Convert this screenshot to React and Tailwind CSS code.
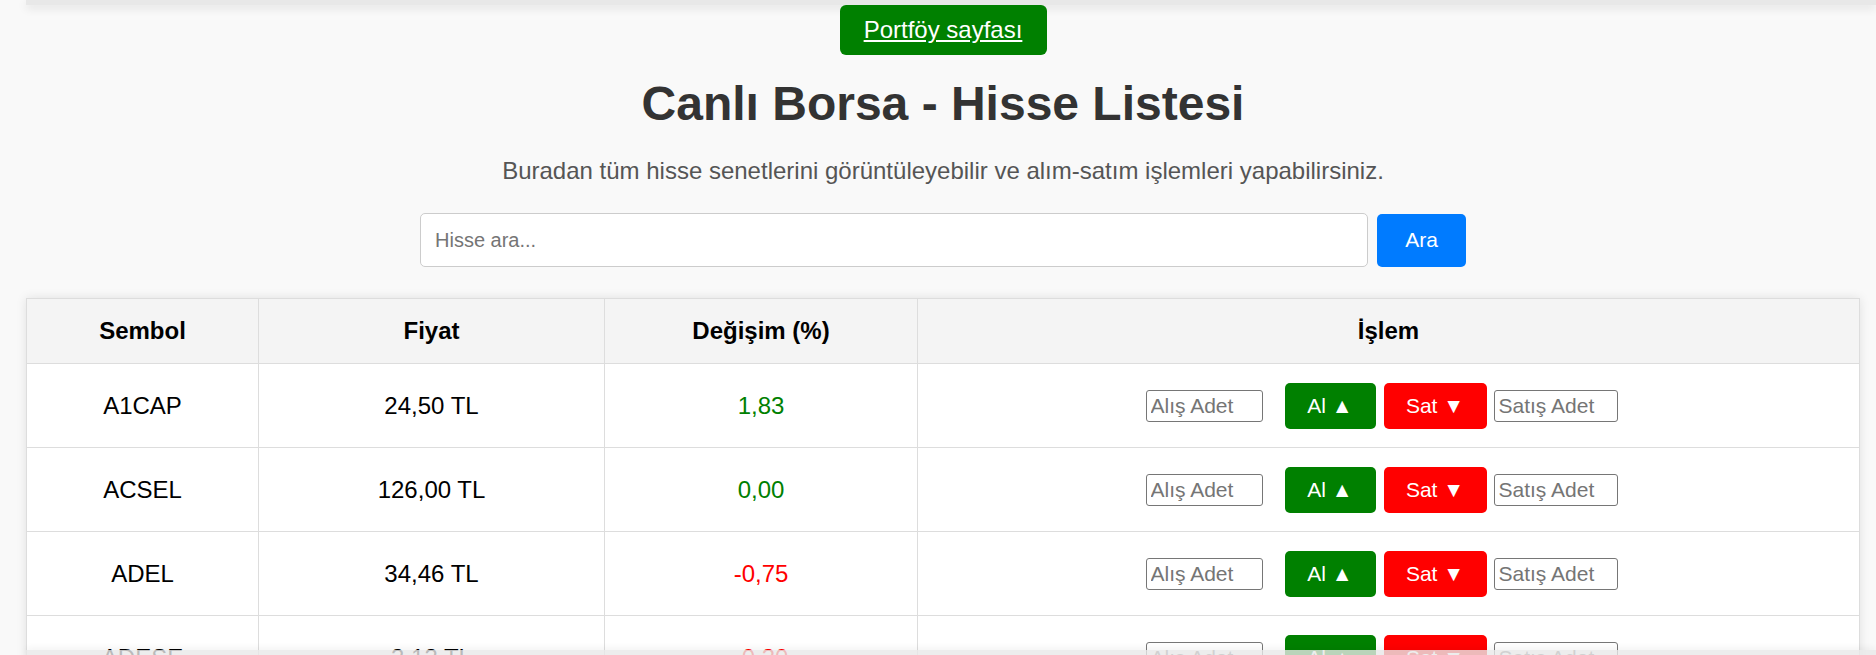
import { useState } from "react";

const stocks = [
    { symbol: "A1CAP", price: "24,50 TL", change: "1,83", up: true },
    { symbol: "ACSEL", price: "126,00 TL", change: "0,00", up: true },
    { symbol: "ADEL", price: "34,46 TL", change: "-0,75", up: false },
    { symbol: "ADESE", price: "3,13 TL", change: "-0,30", up: false },
    { symbol: "ADGYO", price: "48,20 TL", change: "1,20", up: true },
];

function StockRow({ item }) {
    const [buy, setBuy] = useState("");
    const [sell, setSell] = useState("");

    return (
        <tr>
            <td className="border border-[#ddd] h-[84px] text-center text-[24px] text-black">{item.symbol}</td>
            <td className="border border-[#ddd] h-[84px] text-center text-[24px] text-black">{item.price}</td>
            <td className={`border border-[#ddd] h-[84px] text-center text-[24px] ${item.up ? "text-[#008000]" : "text-[#ff0000]"}`}>
                {item.change}
            </td>
            <td className="border border-[#ddd] h-[84px]">
                <div className="flex items-center justify-center">
                    <input
                        value={buy}
                        onChange={(e) => setBuy(e.target.value)}
                        placeholder="Alış Adet"
                        className="w-[117px] h-[32px] border border-[#767676] rounded-[3px] px-[4px] text-[21px] bg-white placeholder:text-[#757575] mr-[22px]"
                    />
                    <button className="w-[91px] h-[46px] bg-[#008000] text-white text-[21px] rounded-[5px] mr-[8px]">
                        Al ▲
                    </button>
                    <button className="w-[103px] h-[46px] bg-[#ff0000] text-white text-[21px] rounded-[5px] mr-[7px]">
                        Sat ▼
                    </button>
                    <input
                        value={sell}
                        onChange={(e) => setSell(e.target.value)}
                        placeholder="Satış Adet"
                        className="w-[124px] h-[32px] border border-[#767676] rounded-[3px] px-[4px] text-[21px] bg-white placeholder:text-[#757575] mr-[14px]"
                    />
                </div>
            </td>
        </tr>
    );
}

export default function App() {
    const [query, setQuery] = useState("");

    return (
        <div className="min-h-screen bg-[#f9f9f9] font-['Liberation_Sans',Arial,sans-serif] text-[#333]">
            {/* top bar */}
            <div className="ml-[26px] h-[5px] bg-[#e8e8e8] shadow-[0_3px_10px_rgba(0,0,0,0.12)]"></div>

            <div className="ml-[26px] mr-[16px] flex flex-col items-center">
                <a
                    href="#"
                    className="w-[207px] h-[50px] flex items-center justify-center bg-[#008000] text-white text-[24px] underline rounded-[6px]"
                >
                    Portföy sayfası
                </a>

                <h1 className="mt-[21px] text-[48px] font-bold leading-[55px] text-[#333]">Canlı Borsa - Hisse Listesi</h1>

                <p className="mt-[26px] text-[24px] leading-[28px] text-[#555]">
                    Buradan tüm hisse senetlerini görüntüleyebilir ve alım-satım işlemleri yapabilirsiniz.
                </p>

                <div className="mt-[28px] flex items-center gap-[9px]">
                    <input
                        value={query}
                        onChange={(e) => setQuery(e.target.value)}
                        placeholder="Hisse ara..."
                        className="w-[948px] h-[54px] border border-[#ccc] rounded-[5px] bg-white px-[14px] text-[20px] placeholder:text-[#757575]"
                    />
                    <button className="w-[89px] h-[53px] bg-[#007bff] text-white text-[21px] rounded-[5px]">Ara</button>
                </div>

                <table className="mt-[31px] w-full border-collapse bg-white shadow-[0_0_10px_rgba(0,0,0,0.1)]">
                    <thead>
                        <tr>
                            <th className="w-[232px] h-[65px] border border-[#ddd] bg-[#f4f4f4] text-[24px] font-bold text-black">Sembol</th>
                            <th className="w-[346px] h-[65px] border border-[#ddd] bg-[#f4f4f4] text-[24px] font-bold text-black">Fiyat</th>
                            <th className="w-[313px] h-[65px] border border-[#ddd] bg-[#f4f4f4] text-[24px] font-bold text-black">Değişim (%)</th>
                            <th className="h-[65px] border border-[#ddd] bg-[#f4f4f4] text-[24px] font-bold text-black">İşlem</th>
                        </tr>
                    </thead>
                    <tbody>
                        {stocks.map((item) => (
                            <StockRow key={item.symbol} item={item} />
                        ))}
                    </tbody>
                </table>
            </div>

            {/* bottom bar */}
            <div className="fixed bottom-0 left-[26px] right-0 h-[5px] bg-[#e8e8e8]/80 shadow-[0_-2px_6px_rgba(0,0,0,0.06)]"></div>
        </div>
    );
}
